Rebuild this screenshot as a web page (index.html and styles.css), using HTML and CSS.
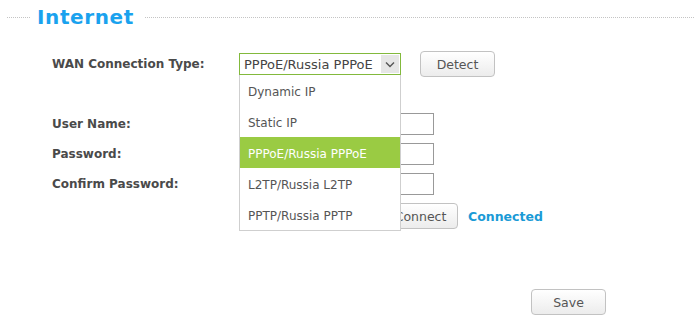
FILE: index.html
```html
<!DOCTYPE html>
<html lang="en">
<head>
    <meta charset="UTF-8">
    <meta name="viewport" content="width=device-width, initial-scale=1.0">
    <title>Internet</title>
    <link rel="stylesheet" href="styles.css">
</head>
<body>
    <div class="page">
        <div class="section-title">
            <span class="rule rule-short"></span>
            <h2>Internet</h2>
            <span class="rule"></span>
        </div>

        <div class="form">
            <div class="row row-wan">
                <label class="label">WAN Connection Type:</label>
                <div class="select-wrap">
                    <div class="select">
                        <span class="select-value">PPPoE/Russia PPPoE</span>
                        <span class="select-arrow">
                            <svg width="10" height="7" viewBox="0 0 10 7"><path d="M1 1.5 L5 5.5 L9 1.5" fill="none" stroke="#555" stroke-width="1.4"/></svg>
                        </span>
                    </div>
                    <ul class="dropdown">
                        <li>Dynamic IP</li>
                        <li>Static IP</li>
                        <li class="selected">PPPoE/Russia PPPoE</li>
                        <li>L2TP/Russia L2TP</li>
                        <li>PPTP/Russia PPTP</li>
                    </ul>
                </div>
                <button class="btn btn-detect">Detect</button>
            </div>

            <div class="row row-field">
                <label class="label">User Name:</label>
                <input class="text-input" type="text">
            </div>
            <div class="row row-field">
                <label class="label">Password:</label>
                <input class="text-input" type="password">
            </div>
            <div class="row row-field">
                <label class="label">Confirm Password:</label>
                <input class="text-input" type="password">
            </div>

            <div class="row row-connect">
                <span class="label"></span>
                <button class="btn btn-connect">Connect</button>
                <span class="status">Connected</span>
            </div>

            <div class="row row-save">
                <button class="btn btn-save">Save</button>
            </div>
        </div>
    </div>
</body>
</html>
```

FILE: styles.css
```css
body {
    margin: 0;
    font-family: "DejaVu Sans", Verdana, sans-serif;
    font-size: 12px;
    color: #555;
    background: #fff;
}
.page {
    width: 694px;
    height: 329px;
    overflow: hidden;
}
.section-title {
    display: flex;
    align-items: center;
    height: 34px;
    padding-left: 7px;
}
.section-title h2 {
    margin: 0 11px 0 7px;
    font-size: 20px;
    letter-spacing: 0.6px;
    font-weight: bold;
    color: #1aa2ee;
}
.rule {
    flex: 1;
    border-top: 1px dotted #c4c4c4;
}
.rule-short {
    flex: 0 0 23px;
}
.form {
    padding-left: 52px;
}
.row {
    display: flex;
    align-items: center;
}
.label {
    flex: 0 0 187px;
    font-size: 12px;
    font-weight: bold;
    color: #4a4a4a;
}
.row-wan {
    margin-top: 17px;
    height: 26px;
}
.row-field {
    height: 22px;
    margin-bottom: 8px;
}
.row-wan + .row-field {
    margin-top: 36px;
}
.row-connect {
    height: 26px;
}
.row-save {
    margin-top: 60px;
    padding-left: 479px;
}
.select-wrap {
    position: relative;
    width: 162px;
}
.select {
    box-sizing: border-box;
    display: flex;
    align-items: center;
    justify-content: space-between;
    height: 22px;
    border: 1px solid #82b93c;
    padding: 0 1px 0 4px;
    color: #444;
    font-size: 13px;
}
.select-arrow {
    display: flex;
    align-items: center;
    justify-content: center;
    width: 18px;
    height: 18px;
    background: #e6e6e6;
}
.dropdown {
    position: absolute;
    top: 100%;
    left: 0;
    z-index: 2;
    box-sizing: border-box;
    width: 162px;
    margin: 0;
    padding: 0;
    list-style: none;
    background: #fff;
    border: 1px solid #cfcfcf;
    border-top: none;
}
.dropdown li {
    box-sizing: border-box;
    height: 31px;
    padding: 3px 0 0 8px;
    line-height: 28px;
    color: #555;
}
.dropdown li.selected {
    background: #9acb43;
    color: #fff;
}
.btn {
    box-sizing: border-box;
    width: 75px;
    height: 26px;
    border: 1px solid #c2c2c2;
    border-radius: 4px;
    background: linear-gradient(#ffffff, #ececec);
    font-family: "DejaVu Sans", Verdana, sans-serif;
    font-size: 12.5px;
    color: #555;
    padding: 0;
}
.btn-detect {
    margin-left: 19px;
}
.btn-connect {
    margin-left: 144px;
}
.status {
    margin-left: 10px;
    font-size: 12.5px;
    font-weight: bold;
    color: #1a9ad6;
}
.text-input {
    box-sizing: border-box;
    width: 195px;
    height: 22px;
    margin: 0;
    border: 1px solid #999;
    padding: 0 4px;
}
```
